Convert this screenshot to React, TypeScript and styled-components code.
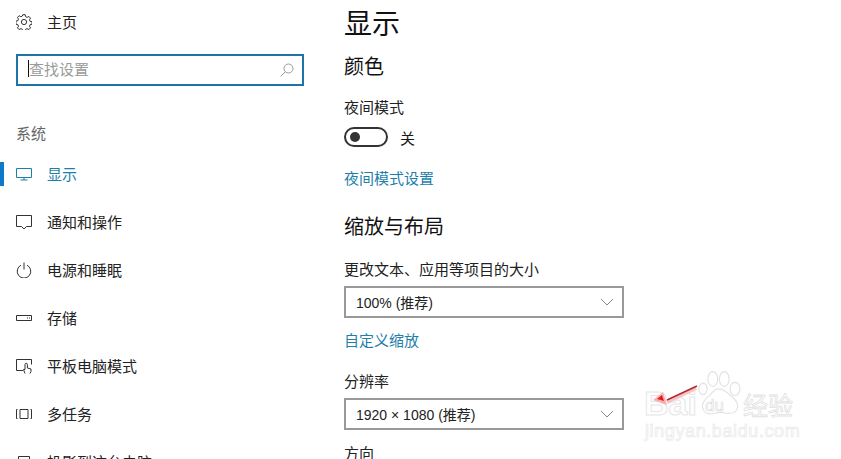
import styled, { createGlobalStyle } from "styled-components";
import { type ReactNode } from "react";

const GlobalStyle = createGlobalStyle`
  html, body {
    margin: 0;
    padding: 0;
    background: #fff;
    overflow: hidden;
  }
  * {
    box-sizing: border-box;
  }
`;

const Page = styled.div`
  position: relative;
  width: 841px;
  height: 459px;
  overflow: hidden;
  display: flex;
  background: #fff;
  color: #1a1a1a;
  font-family: "Noto Sans CJK SC", "Liberation Sans", sans-serif;
  font-size: 15px;
`;

const Sidebar = styled.aside`
  width: 344px;
  flex-shrink: 0;
  display: flex;
  flex-direction: column;
`;

const NavRow = styled.div<{ $active?: boolean }>`
  position: relative;
  height: 48px;
  flex-shrink: 0;
  display: flex;
  align-items: center;
  padding-left: 16px;
  gap: 15px;
  color: ${(p) => (p.$active ? "#1f7fab" : "#222")};

  svg {
    width: 16px;
    height: 16px;
    flex-shrink: 0;
    fill: none;
    stroke: ${(p) => (p.$active ? "#1f7fab" : "#333")};
    stroke-width: 1;
  }

  &::before {
    content: "";
    display: ${(p) => (p.$active ? "block" : "none")};
    position: absolute;
    left: 0;
    top: 12px;
    width: 4px;
    height: 24px;
    background: #0f78c8;
  }
`;

const NavLabel = styled.span`
  margin-bottom: 2px;
`;

const HomeRow = styled(NavRow)`
  height: 44px;
  margin-bottom: 10px;
`;

const SearchBox = styled.div`
  margin-left: 16px;
  width: 288px;
  height: 32px;
  flex-shrink: 0;
  border: 2px solid #1c74a8;
  display: flex;
  align-items: center;
  justify-content: space-between;
  padding: 0 8px 0 10px;
  color: #9a9a9a;
  line-height: 1;

  svg {
    width: 14px;
    height: 14px;
    fill: none;
    stroke: #999;
    stroke-width: 1;
  }
`;

const Caret = styled.span`
  border-left: 1px solid #111;
  padding: 1px 0;
  margin-bottom: 3px;
`;

const SectionLabel = styled.div`
  margin: 35px 0 0 16px;
  height: 24px;
  line-height: 24px;
  color: #666;
  flex-shrink: 0;
`;

const NavList = styled.nav`
  margin-top: 5px;
  display: flex;
  flex-direction: column;
`;

const Main = styled.main`
  flex: 1;
  display: flex;
  flex-direction: column;
`;

const Title = styled.h1`
  margin: 0;
  font-size: 28px;
  font-weight: 400;
  line-height: 44px;
  color: #111;
`;

const Subtitle = styled.h2<{ $top: number }>`
  margin: ${(p) => p.$top}px 0 0;
  font-size: 20px;
  font-weight: 400;
  line-height: 28px;
  color: #111;
`;

const FieldLabel = styled.div<{ $top: number }>`
  margin-top: ${(p) => p.$top}px;
  line-height: 20px;
  color: #222;
`;

const ToggleRow = styled.div`
  margin-top: 10px;
  display: flex;
  align-items: center;
  gap: 12px;
  height: 20px;
`;

const ToggleTrack = styled.div`
  width: 44px;
  height: 20px;
  border: 2px solid #333;
  border-radius: 10px;
  display: flex;
  align-items: center;
  padding-left: 4px;
`;

const ToggleKnob = styled.div`
  width: 10px;
  height: 10px;
  border-radius: 50%;
  background: #333;
`;

const LinkText = styled.div<{ $top: number }>`
  margin-top: ${(p) => p.$top}px;
  line-height: 20px;
  color: #1f7fab;
`;

const Select = styled.div`
  margin-top: 7px;
  width: 280px;
  height: 32px;
  flex-shrink: 0;
  border: 2px solid #999;
  display: flex;
  align-items: center;
  justify-content: space-between;
  padding: 0 8px 0 10px;
  color: #222;
  font-family: "Liberation Sans", "Noto Sans CJK SC", sans-serif;
  font-size: 14px;

  svg {
    width: 14px;
    height: 14px;
    fill: none;
    stroke: #888;
    stroke-width: 1;
  }
`;

const Watermark = styled.div`
  position: absolute;
  left: 643px;
  top: 366px;
  width: 170px;
  height: 92px;
  color: transparent;
  font-family: "Liberation Sans", "Noto Sans CJK SC", sans-serif;
  pointer-events: none;
`;

const BrandText = styled.span`
  position: absolute;
  left: 1px;
  top: 19px;
  font-size: 34px;
  font-weight: 700;
  line-height: 36px;
  -webkit-text-stroke: 1px #e6e6e6;
`;

const DuText = styled.span`
  position: absolute;
  left: 62px;
  top: 30px;
  font-size: 17px;
  line-height: 20px;
  -webkit-text-stroke: 0.7px #dedede;
`;

const ExpText = styled.span`
  position: absolute;
  left: 100px;
  top: 23px;
  font-size: 25px;
  line-height: 30px;
  font-family: "Noto Sans CJK SC", sans-serif;
  -webkit-text-stroke: 0.8px #e2e2e2;
`;

const UrlText = styled.span`
  position: absolute;
  left: 2px;
  top: 54px;
  font-size: 18px;
  line-height: 22px;
  letter-spacing: 0.6px;
  -webkit-text-stroke: 0.7px #e8e8e8;
`;

const PawSvg = styled.svg`
  position: absolute;
  left: 55px;
  top: 2px;
  width: 46px;
  height: 50px;
  fill: none;
  stroke: #e2e2e2;
  stroke-width: 1.4;
`;

const ArrowSvg = styled.svg`
  position: absolute;
  left: 643px;
  top: 380px;
  width: 60px;
  height: 40px;
`;

const Icons: Record<string, ReactNode> = {
  gear: (
    <svg viewBox="0 0 16 16">
      <circle cx="8" cy="8" r="2.6" />
      <path d="M6.8.7h2.4l.4 2 1.5.7 1.8-1 1.6 1.7-1 1.7.6 1.5 2 .5v2.4l-2 .5-.6 1.5 1 1.7-1.6 1.7-1.8-1-1.5.7-.4 2H6.8l-.4-2-1.5-.7-1.8 1-1.6-1.7 1-1.7-.6-1.5-2-.5V7.1l2-.5.6-1.5-1-1.7 1.6-1.7 1.8 1 1.5-.7z" />
    </svg>
  ),
  monitor: (
    <svg viewBox="0 0 16 16">
      <path d="M.5 2.5h15v9H.5zM8 11.5v2.5M4.5 14h7" />
    </svg>
  ),
  message: (
    <svg viewBox="0 0 16 16">
      <path d="M.5 1.5h15v11h-5L8 15l-2.5-2.5h-5z" />
    </svg>
  ),
  power: (
    <svg viewBox="0 0 16 16">
      <path d="M5 3.2a6.8 6.8 0 1 0 6 0M8 .5v7" />
    </svg>
  ),
  storage: (
    <svg viewBox="0 0 16 16">
      <path d="M.5 5.5h15v5H.5zM11 8h1M13 8h1" />
    </svg>
  ),
  tablet: (
    <svg viewBox="0 0 16 16">
      <path d="M7 12.5H.5v-11h15v5M9 15.5l-1.5-4h1.5V6.5a1.2 1.2 0 0 1 2.4 0v3.5l3.6 1v2.5l-1 2" />
    </svg>
  ),
  multitask: (
    <svg viewBox="0 0 16 16">
      <path d="M4 3.5h8v9H4zM1.5 3.5H.5v9h1M14.5 3.5h1v9h-1" />
    </svg>
  ),
  project: (
    <svg viewBox="0 0 16 16">
      <path d="M2.5 2.5h11v9h-11z" />
    </svg>
  ),
};

const navItems = [
  { label: "显示", icon: "monitor", active: true },
  { label: "通知和操作", icon: "message" },
  { label: "电源和睡眠", icon: "power" },
  { label: "存储", icon: "storage" },
  { label: "平板电脑模式", icon: "tablet" },
  { label: "多任务", icon: "multitask" },
  { label: "投影到这台电脑", icon: "project" },
];

function Chevron() {
  return (
    <svg viewBox="0 0 14 14">
      <path d="M1 4l6 6 6-6" />
    </svg>
  );
}

export default function App() {
  return (
    <Page>
      <GlobalStyle />
      <Sidebar>
        <HomeRow>
          {Icons.gear}
          <NavLabel>主页</NavLabel>
        </HomeRow>
        <SearchBox>
          <Caret>查找设置</Caret>
          <svg viewBox="0 0 14 14">
            <circle cx="8.5" cy="5.5" r="4.5" />
            <path d="M5.2 8.8L.6 13.4" />
          </svg>
        </SearchBox>
        <SectionLabel>系统</SectionLabel>
        <NavList>
          {navItems.map((item) => (
            <NavRow key={item.label} $active={item.active}>
              {Icons[item.icon]}
              <NavLabel>{item.label}</NavLabel>
            </NavRow>
          ))}
        </NavList>
      </Sidebar>
      <Main>
        <Title>显示</Title>
        <Subtitle $top={8}>颜色</Subtitle>
        <FieldLabel $top={17}>夜间模式</FieldLabel>
        <ToggleRow>
          <ToggleTrack>
            <ToggleKnob />
          </ToggleTrack>
          关
        </ToggleRow>
        <LinkText $top={21}>夜间模式设置</LinkText>
        <Subtitle $top={24}>缩放与布局</Subtitle>
        <FieldLabel $top={19}>更改文本、应用等项目的大小</FieldLabel>
        <Select>
          100% (推荐)
          <Chevron />
        </Select>
        <LinkText $top={12}>自定义缩放</LinkText>
        <FieldLabel $top={21}>分辨率</FieldLabel>
        <Select>
          1920 × 1080 (推荐)
          <Chevron />
        </Select>
        <FieldLabel $top={13}>方向</FieldLabel>
      </Main>
      <Watermark>
        <BrandText>Bai</BrandText>
        <PawSvg viewBox="0 0 56 58">
          <ellipse cx="18" cy="12" rx="6" ry="9" />
          <ellipse cx="32" cy="12" rx="6" ry="9" />
          <ellipse cx="45" cy="24" rx="6" ry="8" />
          <ellipse cx="6" cy="24" rx="5" ry="7" />
          <path d="M25 24c-6 0-8 6-13 10-5 4-8 8-6 14 2 6 8 7 13 6 4-1 8-2 12-1 5 1 12 2 16-3 3-5 1-11-4-15-5-4-10-11-18-11z" />
        </PawSvg>
        <DuText>du</DuText>
        <ExpText>经验</ExpText>
        <UrlText>jingyan.baidu.com</UrlText>
      </Watermark>
      <ArrowSvg viewBox="0 0 60 40">
        <path d="M53 8L24 22" stroke="#f6c4c4" strokeWidth="4" fill="none" />
        <path d="M54 6L24 20" stroke="#b02a30" strokeWidth="1.6" fill="none" />
        <path d="M20 12L10 20L24 25z" fill="#f9b0b0" />
        <path d="M14 19l5-4 2 6z" fill="#e61c25" />
      </ArrowSvg>
    </Page>
  );
}
